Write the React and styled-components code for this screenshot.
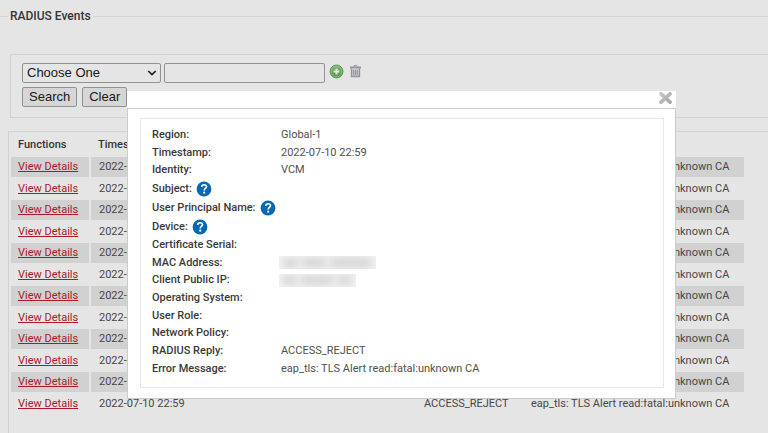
import React from "react";
import styled, { createGlobalStyle, css } from "styled-components";

const GlobalStyle = createGlobalStyle`
  *, *::before, *::after { box-sizing: border-box; }
  html, body { height: 100%; }
  body {
    margin: 0;
    overflow: hidden;
    background: #fff;
    color: #505050;
    font: 11px/16px Roboto, "Liberation Sans", sans-serif;
  }
`;

const Page = styled.main`
  padding-top: 8px;
`;

const EventsGroup = styled.fieldset`
  min-width: 0;
  margin: 0;
  padding: 0;
  border: 0 solid #ebebeb;
  border-top-width: 1px;
`;

const GroupTitle = styled.legend`
  margin-left: 8px;
  padding: 0 2px;
  color: #3c3c3c;
  font-size: 12px;
  font-weight: 500;
  line-height: 16px;
`;

const SearchForm = styled.form`
  display: flex;
  flex-direction: column;
  gap: 4px;
  margin: 30px 0 13px 10px;
  padding: 8px 11px 10px;
  border: 1px solid #ebebeb;
  border-right: 0;
`;

const FormRow = styled.div`
  display: flex;
  align-items: center;
  gap: ${(p) => p.$gap}px;
`;

const controlStyle = css`
  height: 20px;
  margin: 0;
  border: 1px solid #a3a3a3;
  border-radius: 2px;
  background-color: #fff;
  color: #222;
  font: 13px/16px "Liberation Sans", Arial, sans-serif;
`;

const SelectWrap = styled.div`
  display: grid;
  align-items: center;
  width: 139px;

  > * { grid-area: 1 / 1; }
  > svg { justify-self: end; margin-right: 4px; pointer-events: none; }
`;

const FieldSelect = styled.select`
  ${controlStyle}
  width: 100%;
  padding: 0 4px;
  appearance: none;
`;

const FieldInput = styled.input`
  ${controlStyle}
  width: 161px;
`;

const FormButton = styled.button`
  ${controlStyle}
  padding: 0 6px;
  background-color: #efefef;
`;

const IconButton = styled.button`
  display: flex;
  padding: 0;
  border: 0;
  background: none;
`;

const IconGroup = styled.div`
  display: flex;
  align-items: center;
  gap: 5px;
  padding: 0 0 4px 1px;
`;

const TablePanel = styled.section`
  height: 320px;
  margin-left: 8px;
  border: 1px solid #ebebeb;
  border-right: 0;
`;

const EventsTable = styled.table`
  border-spacing: 2px;
  table-layout: fixed;
  width: 737px;
  line-height: 16px;
  white-space: nowrap;
`;

const Column = styled.col`
  width: ${(p) => p.$width}px;
`;

const HeadCell = styled.th`
  height: 21px;
  padding: 0 7px;
  color: #3c3c3c;
  font-weight: 500;
  text-align: left;
`;

const EventRow = styled.tr`
  height: 19px;

  &:nth-child(odd) { height: 20px; }
  &:nth-child(odd) > td { background: #e9e9e9; }
`;

const Cell = styled.td`
  padding: 0 8px;

  &:first-child { padding: 0 7px; }
`;

const DetailsLink = styled.a`
  color: #c01c30;
  text-decoration: underline;
`;

const Overlay = styled.div`
  position: fixed;
  inset: 0;
  padding: 91px 92px 0 127px;
  background: rgba(0, 0, 0, 0.1);
`;

const Dialog = styled.div`
  background: #fff;
`;

const DialogBar = styled.div`
  display: flex;
  justify-content: flex-end;
  height: 17px;
  padding: 0 3px 0 0;
`;

const DialogBody = styled.div`
  padding: 9px 11px 10px 12px;
  border: 1px solid #ccc;
`;

const DetailList = styled.dl`
  margin: 0;
  padding: 7px 11px 10px;
  border: 1px solid #e8e8e8;
`;

const DetailRow = styled.div`
  display: grid;
  grid-template-columns: 129px 1fr;
  align-items: center;
  height: 18px;
  line-height: 14px;

  &:nth-child(3n + 2) { height: 17px; }
  &&:has(svg) { height: 19px; }
`;

const DetailLabel = styled.dt`
  display: flex;
  align-items: center;
  gap: 4px;
  color: #3a3a3a;
  font-weight: 500;
  white-space: nowrap;

  > svg { flex: none; }
`;

const DetailValue = styled.dd`
  display: flex;
  align-items: center;
  margin: 0;
`;

const Redacted = styled.span`
  display: flex;
  align-items: center;
  gap: 4px;
  width: ${(p) => p.$width}px;
  height: 13px;
  margin-left: -2px;
  padding: 0 4px;
  overflow: hidden;
  background: #f3f3f3;
`;

const Smudge = styled.span`
  flex: ${(p) => p.$size};
  height: 8px;
  background: #cfcfcf;
  filter: blur(4px);
`;

const AddIcon = () => (
  <svg width="15" height="15" viewBox="0 0 15 15" aria-hidden="true">
    <defs>
      <linearGradient id="addFill" x1="0" y1="0" x2="0" y2="1">
        <stop offset="0" stopColor="#8fcf80" />
        <stop offset="1" stopColor="#5aa84b" />
      </linearGradient>
    </defs>
    <circle cx="7.5" cy="7.5" r="6.5" fill="url(#addFill)" stroke="#6fb263" />
    <circle cx="7.5" cy="7.5" r="5.3" fill="none" stroke="#a5d699" strokeWidth=".7" />
    <path d="M7.5 4.6v5.8M4.6 7.5h5.8" stroke="#fff" strokeWidth="2" />
  </svg>
);

const TrashIcon = () => (
  <svg width="13" height="13" viewBox="0 0 13 13" fill="none" stroke="#a3a4b0" aria-hidden="true">
    <path d="M5 1.3V.6h3v.7" />
    <path d="M1 2.5h11" strokeWidth="2" />
    <path d="M2.5 3.5v8h8v-8" fill="#dddde3" strokeWidth="1.3" />
    <path d="M4.7 5v5M6.5 5v5M8.3 5v5" />
  </svg>
);

const ChevronIcon = () => (
  <svg width="10" height="8" viewBox="0 0 10 8" fill="none" aria-hidden="true">
    <path d="M1.3 2l3.7 3.6L8.7 2" stroke="#222" strokeWidth="1.7" />
  </svg>
);

const CloseIcon = () => (
  <svg width="15" height="14" viewBox="0 0 15 14" aria-hidden="true">
    <defs>
      <linearGradient id="closeFill" gradientUnits="userSpaceOnUse" x1="2" y1="2" x2="12" y2="13">
        <stop offset="0" stopColor="#c8c8c8" />
        <stop offset="1" stopColor="#a6a6a6" />
      </linearGradient>
    </defs>
    <path d="M3 2.8l9 8.4M12 2.8l-9 8.4" stroke="url(#closeFill)" strokeWidth="3.8" strokeLinecap="round" />
  </svg>
);

const HelpIcon = () => (
  <svg width="16" height="16" viewBox="0 0 16 16" role="img" aria-label="Help">
    <circle cx="8" cy="8" r="7.4" fill="#0867b2" />
    <path d="M5.7 6.1c0-1.6 1-2.4 2.4-2.4s2.4.8 2.4 2.1c0 1.7-2.3 1.7-2.3 3.6" fill="none" stroke="#fff" strokeWidth="1.6" />
    <circle cx="8.2" cy="11.7" r="1.1" fill="#fff" />
  </svg>
);

const details = [
  { label: "Region:", value: "Global-1" },
  { label: "Timestamp:", value: "2022-07-10 22:59" },
  { label: "Identity:", value: "VCM" },
  { label: "Subject:", help: true },
  { label: "User Principal Name:", help: true },
  { label: "Device:", help: true },
  { label: "Certificate Serial:" },
  { label: "MAC Address:", redacted: { width: 97, parts: [14, 24, 40] } },
  { label: "Client Public IP:", redacted: { width: 77, parts: [13, 31, 14] } },
  { label: "Operating System:" },
  { label: "User Role:" },
  { label: "Network Policy:" },
  { label: "RADIUS Reply:", value: "ACCESS_REJECT" },
  { label: "Error Message:", value: "eap_tls: TLS Alert read:fatal:unknown CA" },
];

const events = Array.from({ length: 12 }, (_, id) => ({
  id,
  time: "2022-07-10 22:59",
  reply: "ACCESS_REJECT",
  error: "eap_tls: TLS Alert read:fatal:unknown CA",
}));

export default function App() {
  return (
    <>
      <GlobalStyle />
      <Page>
        <EventsGroup>
          <GroupTitle>RADIUS Events</GroupTitle>
          <SearchForm onSubmit={(e) => e.preventDefault()}>
            <FormRow $gap={3}>
              <SelectWrap>
                <FieldSelect aria-label="Search field">
                  <option>Choose One</option>
                </FieldSelect>
                <ChevronIcon />
              </SelectWrap>
              <FieldInput type="text" aria-label="Search value" />
              <IconGroup>
                <IconButton type="button" aria-label="Add"><AddIcon /></IconButton>
                <IconButton type="button" aria-label="Delete"><TrashIcon /></IconButton>
              </IconGroup>
            </FormRow>
            <FormRow $gap={5}>
              <FormButton type="submit">Search</FormButton>
              <FormButton type="reset">Clear</FormButton>
            </FormRow>
          </SearchForm>
          <TablePanel>
            <EventsTable>
              <colgroup>
                <Column $width={78} />
                <Column $width={323} />
                <Column $width={105} />
                <Column $width={221} />
              </colgroup>
              <thead>
                <tr>
                  <HeadCell>Functions</HeadCell>
                  <HeadCell>Timestamp</HeadCell>
                  <HeadCell>RADIUS Reply</HeadCell>
                  <HeadCell>Error Message</HeadCell>
                </tr>
              </thead>
              <tbody>
                {events.map((event) => (
                  <EventRow key={event.id}>
                    <Cell><DetailsLink href="#details">View Details</DetailsLink></Cell>
                    <Cell>{event.time}</Cell>
                    <Cell>{event.reply}</Cell>
                    <Cell>{event.error}</Cell>
                  </EventRow>
                ))}
              </tbody>
            </EventsTable>
          </TablePanel>
        </EventsGroup>
      </Page>
      <Overlay>
        <Dialog role="dialog" aria-label="Event details">
          <DialogBar>
            <IconButton type="button" aria-label="Close"><CloseIcon /></IconButton>
          </DialogBar>
          <DialogBody>
            <DetailList>
              {details.map((item) => (
                <DetailRow key={item.label}>
                  <DetailLabel>
                    {item.label}
                    {item.help && <HelpIcon />}
                  </DetailLabel>
                  <DetailValue>
                    {item.value}
                    {item.redacted && (
                      <Redacted $width={item.redacted.width}>
                        {item.redacted.parts.map((size) => (
                          <Smudge key={size} $size={size} />
                        ))}
                      </Redacted>
                    )}
                  </DetailValue>
                </DetailRow>
              ))}
            </DetailList>
          </DialogBody>
        </Dialog>
      </Overlay>
    </>
  );
}
